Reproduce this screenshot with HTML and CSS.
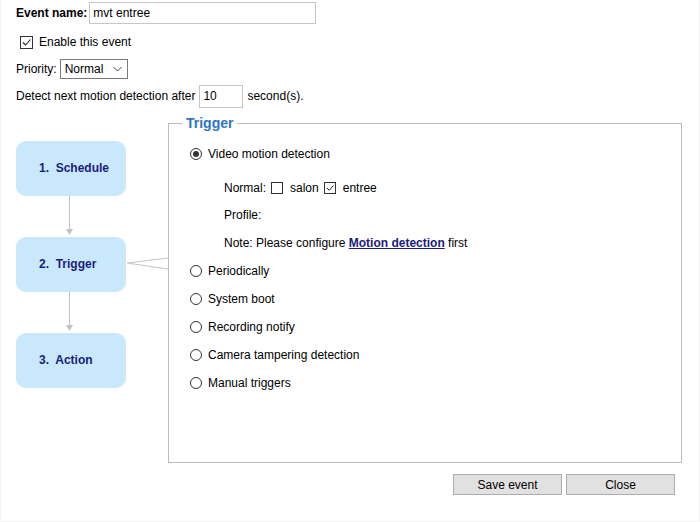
FILE: index.html
```html
<!DOCTYPE html>
<html lang="en">
<head>
    <meta charset="UTF-8">
    <title>Event settings</title>
    <link rel="stylesheet" href="styles.css">
</head>
<body>
    <div class="field-row row-name">
        <label class="name-label" for="event-name">Event name:</label>
        <input type="text" id="event-name" class="text-input name-input" value="mvt entree">
    </div>
    <div class="field-row row-enable">
        <span class="check big checked">
            <svg width="11" height="11" viewBox="0 0 11 11"><path d="M2 5.5 L4.5 8 L9.5 2.5" fill="none" stroke="#222" stroke-width="1.1"/></svg>
        </span>
        <span class="enable-label">Enable this event</span>
    </div>
    <div class="field-row row-priority">
        <span>Priority:</span>
        <div class="select-box">
            <span>Normal</span>
            <svg width="9" height="6" viewBox="0 0 9 6"><path d="M0.5 1 L4.5 5 L8.5 1" fill="none" stroke="#444" stroke-width="1"/></svg>
        </div>
    </div>
    <div class="field-row row-detect">
        <span>Detect next motion detection after</span>
        <input type="text" class="text-input delay-input" value="10">
        <span>second(s).</span>
    </div>

    <div class="main">
        <div class="flow">
            <div class="flow-step">
                <div class="flow-box">1.  Schedule</div>
            </div>
            <div class="flow-arrow">
                <svg width="110" height="41" viewBox="0 0 110 41"><line x1="53.5" y1="0" x2="53.5" y2="35" stroke="#c2c2c2" stroke-width="1"/><path d="M50 33 L57 33 L53.5 39 Z" fill="#c2c2c2"/></svg>
            </div>
            <div class="flow-step">
                <div class="flow-box">2.  Trigger</div>
                <svg class="connector" width="42" height="55" viewBox="0 0 42 55"><path d="M1 26 L42 21 M1 26 L42 32" stroke="#c4c4c4" stroke-width="1.2" fill="none"/></svg>
            </div>
            <div class="flow-arrow">
                <svg width="110" height="41" viewBox="0 0 110 41"><line x1="53.5" y1="0" x2="53.5" y2="35" stroke="#c2c2c2" stroke-width="1"/><path d="M50 33 L57 33 L53.5 39 Z" fill="#c2c2c2"/></svg>
            </div>
            <div class="flow-step">
                <div class="flow-box">3.  Action</div>
            </div>
        </div>

        <fieldset class="trigger-set">
            <legend>Trigger</legend>
            <div class="trigger-body">
                <div class="opt"><span class="radio checked"></span><span class="opt-label">Video motion detection</span></div>
                <div class="sub">
                    <div class="sub-row first">
                        <span>Normal:</span>
                        <span class="check small"></span>
                        <span class="win-name">salon</span>
                        <span class="check small checked">
                            <svg width="10" height="10" viewBox="0 0 10 10"><path d="M2 5 L4.2 7.3 L8.5 2.5" fill="none" stroke="#222" stroke-width="1"/></svg>
                        </span>
                        <span class="win-name">entree</span>
                    </div>
                    <div class="sub-row">Profile:</div>
                    <div class="sub-row">Note: Please configure&nbsp;<a href="#" class="link">Motion detection</a>&nbsp;first</div>
                </div>
                <div class="opt"><span class="radio"></span><span class="opt-label">Periodically</span></div>
                <div class="opt"><span class="radio"></span><span class="opt-label">System boot</span></div>
                <div class="opt"><span class="radio"></span><span class="opt-label">Recording notify</span></div>
                <div class="opt"><span class="radio"></span><span class="opt-label">Camera tampering detection</span></div>
                <div class="opt"><span class="radio"></span><span class="opt-label">Manual triggers</span></div>
            </div>
        </fieldset>
    </div>

    <div class="actions">
        <button class="btn">Save event</button>
        <button class="btn">Close</button>
    </div>
</body>
</html>
```

FILE: styles.css
```css
body {
    margin: 0;
    padding: 2px 17px 0 15px;
    min-height: 522px;
    box-sizing: border-box;
    border-left: 1px solid #f4f4f4;
    border-right: 1px solid #f4f4f4;
    border-bottom: 1px solid #f4f4f4;
    font-family: "Liberation Sans", Arial, sans-serif;
    font-size: 12px;
    color: #000;
    background: #fff;
}

.field-row {
    display: flex;
    align-items: center;
}

.row-name {
    height: 22px;
}

.row-enable {
    height: 28px;
    margin-top: 4px;
}

.row-priority {
    height: 21px;
    margin-top: 2px;
}

.row-detect {
    height: 24px;
    margin-top: 5px;
}

.name-label {
    font-weight: bold;
}

.text-input {
    box-sizing: border-box;
    border: 1px solid #c6c6c6;
    font-family: inherit;
    font-size: 12px;
    color: #000;
    padding: 0 3px;
    outline: none;
}

.name-input {
    width: 227px;
    height: 22px;
    margin-left: 2px;
}

.delay-input {
    width: 44px;
    height: 23px;
    margin: 0 4px 0 4px;
}

/* checkboxes */
.check {
    display: inline-flex;
    align-items: center;
    justify-content: center;
    box-sizing: border-box;
    border: 1px solid #333;
    background: #fff;
}

.check.big {
    width: 13px;
    height: 13px;
    margin-left: 4px;
}

.check.small {
    width: 12px;
    height: 12px;
    margin-left: 5px;
}

.enable-label {
    margin-left: 6px;
}

.select-box {
    display: flex;
    align-items: center;
    justify-content: space-between;
    box-sizing: border-box;
    width: 68px;
    height: 20px;
    margin-left: 3px;
    padding: 0 5px 0 4px;
    border: 1px solid #7a7a7a;
    background: #fff;
}

/* flow on the left */
.main {
    display: flex;
    align-items: flex-start;
    margin-top: 7px;
}

.flow {
    width: 152px;
    flex-shrink: 0;
    padding-top: 26px;
}

.flow-step {
    display: flex;
    align-items: center;
}

.flow-box {
    display: flex;
    align-items: center;
    box-sizing: border-box;
    width: 110px;
    height: 55px;
    padding: 0 0 1px 23px;
    border-radius: 10px;
    background: #c9e8fc;
    color: #1b1b7e;
    font-weight: bold;
    white-space: pre;
}

.flow-arrow {
    height: 41px;
}

.flow-arrow svg,
.connector {
    display: block;
}

/* trigger fieldset */
.trigger-set {
    width: 515px;
    box-sizing: border-box;
    margin: 0;
    padding: 0;
    min-width: 0;
    border: 1px solid #bdbdbd;
}

.trigger-set legend {
    margin-left: 13px;
    padding: 0 4px;
    font-size: 14px;
    line-height: 16px;
    font-weight: bold;
    color: #2b76c6;
}

.trigger-body {
    height: 331px;
    box-sizing: border-box;
    padding: 9px 0 0 21px;
}

.opt {
    display: flex;
    align-items: center;
    height: 28px;
}

.radio {
    position: relative;
    width: 12px;
    height: 12px;
    box-sizing: border-box;
    border: 1px solid #333;
    border-radius: 50%;
    background: #fff;
}

.radio.checked::after {
    content: "";
    position: absolute;
    left: 2px;
    top: 2px;
    width: 6px;
    height: 6px;
    border-radius: 50%;
    background: #333;
}

.opt-label {
    margin-left: 6px;
}

.sub {
    padding-left: 34px;
}

.sub-row {
    display: flex;
    align-items: center;
    height: 28px;
}

.sub-row.first {
    height: 27px;
    margin-top: 6px;
}

.win-name {
    margin-left: 7px;
}

.link {
    color: #1b1b7e;
    font-weight: bold;
    text-decoration: underline;
}

/* buttons */
.actions {
    display: flex;
    justify-content: flex-end;
    gap: 4px;
    margin-top: 11px;
    padding-right: 7px;
}

.btn {
    width: 109px;
    height: 21px;
    padding: 0;
    border: 1px solid #adadad;
    background: #e1e1e1;
    font-family: inherit;
    font-size: 12px;
    color: #000;
}
```
